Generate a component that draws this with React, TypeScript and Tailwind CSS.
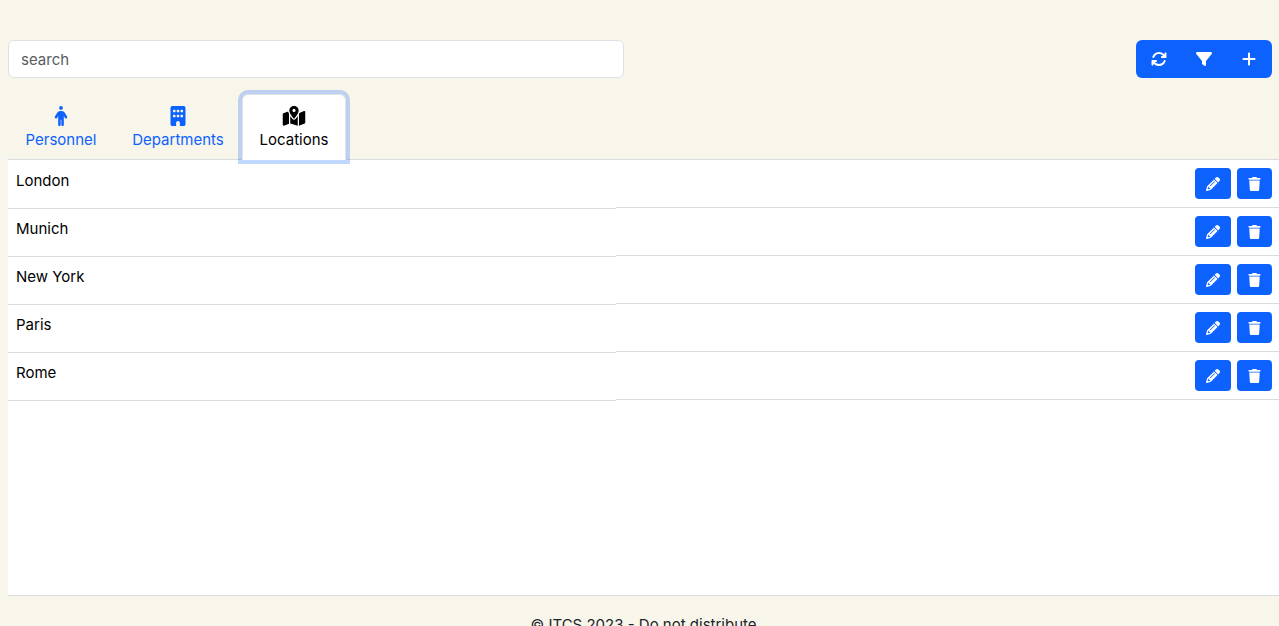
import { useState } from "react";
import type { IconType } from "react-icons";
import {
  FaArrowsRotate,
  FaBuilding,
  FaFilter,
  FaMapLocationDot,
  FaPencil,
  FaPerson,
  FaPlus,
  FaTrash,
} from "react-icons/fa6";

const tabs: { id: string; icon: IconType; width: string }[] = [
  { id: "Personnel", icon: FaPerson, width: "w-[106px]" },
  { id: "Departments", icon: FaBuilding, width: "w-[128px]" },
  { id: "Locations", icon: FaMapLocationDot, width: "w-[104px]" },
];

const locations = ["London", "Munich", "New York", "Paris", "Rome"];

// ─── Toolbar ──────────────────────────────────────────────────────────────────

function ToolbarButton({ label, icon: Icon }: { label: string; icon: IconType }) {
  return (
    <button
      type="button"
      aria-label={label}
      className="flex flex-1 items-center justify-center text-white hover:bg-[#0b5ed7]"
    >
      <Icon size={16} />
    </button>
  );
}

function Toolbar() {
  return (
    <div className="flex items-center justify-between">
      <div className="w-1/2 pr-4">
        <input
          type="text"
          aria-label="search"
          placeholder="search"
          className="block h-[38px] w-full rounded-md border border-[#dee2e6] bg-white px-3 placeholder:text-[#595c5f]"
        />
      </div>
      <div className="flex h-[38px] w-[136px] overflow-hidden rounded-md bg-[#0d62fe]">
        <ToolbarButton label="Refresh" icon={FaArrowsRotate} />
        <ToolbarButton label="Filter" icon={FaFilter} />
        <ToolbarButton label="Add" icon={FaPlus} />
      </div>
    </div>
  );
}

// ─── Table ────────────────────────────────────────────────────────────────────

const rowButton =
  "flex h-[31px] items-center justify-center rounded-sm bg-[#0d62fe] px-[11px] text-white hover:bg-[#0b5ed7]";

function LocationsTable() {
  return (
    <table className="w-full table-fixed border-separate border-spacing-0">
      <colgroup>
        <col className="w-[47.8%]" />
        <col />
      </colgroup>
      <tbody>
        {locations.map(name => (
          <tr key={name}>
            <td className="px-2 pt-[9px] align-top text-black shadow-[0_1px_0_#d9dcdf]">
              {name}
            </td>
            <td className="border-b border-[#d9dcdf] py-2 pr-[7px]">
              <div className="flex justify-end gap-[6px]">
                <button type="button" aria-label={`Edit ${name}`} className={rowButton}>
                  <FaPencil className="h-[14px] w-[14px]" />
                </button>
                <button type="button" aria-label={`Delete ${name}`} className={rowButton}>
                  <FaTrash className="h-[14px] w-[13px]" />
                </button>
              </div>
            </td>
          </tr>
        ))}
      </tbody>
    </table>
  );
}

export default function App() {
  const [active, setActive] = useState("Locations");

  return (
    <div className="h-screen overflow-hidden bg-[#f8f5ea] pl-2 pt-10 font-['Inter',sans-serif] text-[15px] leading-6 text-[#212529]">
      <header className="pr-[7px]">
        <Toolbar />
      </header>

      <div role="tablist" className="mt-4 flex border-b border-[#d9dcdf]">
        {tabs.map(({ id, icon: Icon, width }) => (
          <button
            key={id}
            type="button"
            role="tab"
            aria-selected={active === id}
            onClick={() => setActive(id)}
            className={`-mb-px flex flex-col items-center border pt-[9px] pb-[7px] ${width} ${
              active === id
                ? "relative rounded-t-md border-[#dee2e6] border-b-white bg-white text-black shadow-[0_0_0_4px_rgba(13,98,254,0.25)]"
                : "border-transparent text-[#0d62fe]"
            }`}
          >
            <span className="flex h-6 items-center">
              <Icon className="h-5 w-6" />
            </span>
            {id}
          </button>
        ))}
      </div>

      <main className="h-[calc(100vh-190px)] overflow-y-auto border-b border-[#d9dcdf] bg-white">
        <LocationsTable />
      </main>

      <footer className="pt-[17px] text-center">© ITCS 2023 - Do not distribute</footer>
    </div>
  );
}
